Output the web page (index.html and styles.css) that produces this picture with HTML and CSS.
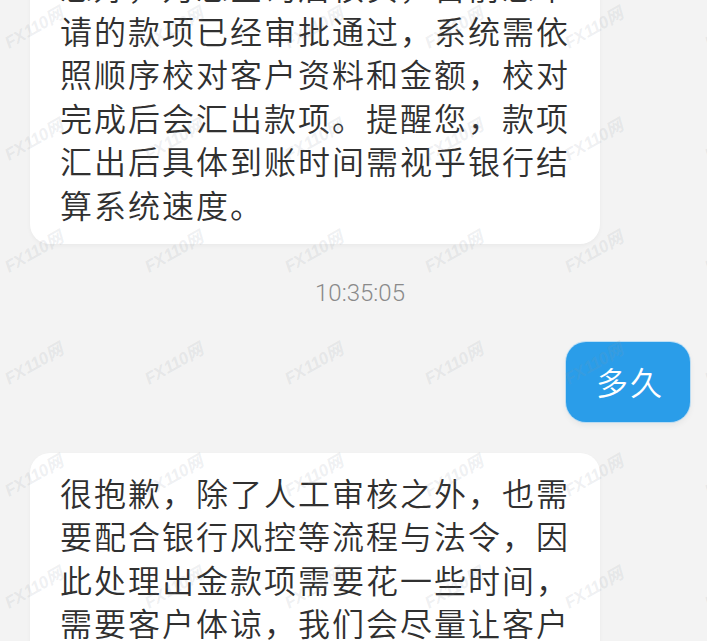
FILE: index.html
```html
<!DOCTYPE html>
<html lang="zh-CN">
<head>
<meta charset="utf-8">
<title>Chat</title>
<link rel="stylesheet" href="styles.css">
</head>
<body>
<div class="screen">
  <div class="chat">
    <div class="msg msg-in">
      <div class="bubble">您好，为您查询后核实，目前您申请的款项已经审批通过，系统需依照顺序校对客户资料和金额，校对完成后会汇出款项。提醒您，款项汇出后具体到账时间需视乎银行结算系统速度。</div>
    </div>
    <div class="time">10:35:05</div>
    <div class="msg msg-out">
      <div class="bubble bubble-blue">多久</div>
    </div>
    <div class="msg msg-in msg-last">
      <div class="bubble">很抱歉，除了人工审核之外，也需要配合银行风控等流程与法令，因此处理出金款项需要花一些时间，需要客户体谅，我们会尽量让客户尽快收到款项。</div>
    </div>
  </div>
  <div class="watermarks" aria-hidden="true">
    <span class="wm"><b>FX</b>110网</span><span class="wm"><b>FX</b>110网</span><span class="wm"><b>FX</b>110网</span><span class="wm"><b>FX</b>110网</span><span class="wm"><b>FX</b>110网</span><span class="wm"><b>FX</b>110网</span>
    <span class="wm"><b>FX</b>110网</span><span class="wm"><b>FX</b>110网</span><span class="wm"><b>FX</b>110网</span><span class="wm"><b>FX</b>110网</span><span class="wm"><b>FX</b>110网</span><span class="wm"><b>FX</b>110网</span>
    <span class="wm"><b>FX</b>110网</span><span class="wm"><b>FX</b>110网</span><span class="wm"><b>FX</b>110网</span><span class="wm"><b>FX</b>110网</span><span class="wm"><b>FX</b>110网</span><span class="wm"><b>FX</b>110网</span>
    <span class="wm"><b>FX</b>110网</span><span class="wm"><b>FX</b>110网</span><span class="wm"><b>FX</b>110网</span><span class="wm"><b>FX</b>110网</span><span class="wm"><b>FX</b>110网</span><span class="wm"><b>FX</b>110网</span>
    <span class="wm"><b>FX</b>110网</span><span class="wm"><b>FX</b>110网</span><span class="wm"><b>FX</b>110网</span><span class="wm"><b>FX</b>110网</span><span class="wm"><b>FX</b>110网</span><span class="wm"><b>FX</b>110网</span>
    <span class="wm"><b>FX</b>110网</span><span class="wm"><b>FX</b>110网</span><span class="wm"><b>FX</b>110网</span><span class="wm"><b>FX</b>110网</span><span class="wm"><b>FX</b>110网</span><span class="wm"><b>FX</b>110网</span>
    <span class="wm"><b>FX</b>110网</span><span class="wm"><b>FX</b>110网</span><span class="wm"><b>FX</b>110网</span><span class="wm"><b>FX</b>110网</span><span class="wm"><b>FX</b>110网</span><span class="wm"><b>FX</b>110网</span>
  </div>
</div>
</body>
</html>
```
FILE: styles.css
```css
html, body {
  margin: 0;
  padding: 0;
}
body {
  background: #f3f3f3;
  font-family: "Noto Sans CJK SC", "Noto Sans", sans-serif;
}
.screen {
  position: relative;
  width: 707px;
  height: 641px;
  overflow: hidden;
  background: #f3f3f3;
}
.chat {
  display: flex;
  flex-direction: column;
  margin-top: -53px;
}
.msg {
  display: flex;
}
.msg-in {
  padding-left: 30px;
}
.bubble {
  width: 512px;
  padding: 18px 28px 18px 30px;
  background: #ffffff;
  border-radius: 20px;
  font-family: "Noto Sans CJK SC", sans-serif;
  font-size: 32px;
  font-weight: 350;
  line-height: 43.5px;
  letter-spacing: 2px;
  color: #303030;
  box-shadow: 0 2px 4px rgba(0, 0, 0, 0.04);
}
.time {
  margin-top: 34px;
  padding-left: 13px;
  text-align: center;
  font-family: Roboto, "Liberation Sans", sans-serif;
  font-weight: 300;
  font-size: 24px;
  line-height: 30px;
  color: #8a8a8a;
}
.msg-out {
  justify-content: flex-end;
  padding-right: 17px;
  margin-top: 34px;
}
.bubble-blue {
  width: auto;
  padding: 18px 26px 18px 30px;
  background: #2a9de9;
  color: #ffffff;
  box-shadow: 0 0 0 1px rgba(140, 205, 250, 0.5), 0 3px 6px rgba(0, 0, 0, 0.06);
}
.msg-last {
  margin-top: 31px;
}
.watermarks {
  position: absolute;
  left: -37px;
  top: -30px;
  display: grid;
  grid-template-columns: repeat(6, 140px);
  grid-auto-rows: 112px;
  place-items: center;
  pointer-events: none;
}
.wm {
  display: inline-block;
  transform: rotate(-30deg);
  font-family: "Liberation Sans", "Noto Sans CJK SC", sans-serif;
  font-size: 17px;
  font-weight: 700;
  font-style: italic;
  color: rgba(140, 150, 160, 0.15);
  white-space: nowrap;
  letter-spacing: -0.5px;
}
.wm b {
  font-weight: 900;
  margin-right: 1px;
}
```
